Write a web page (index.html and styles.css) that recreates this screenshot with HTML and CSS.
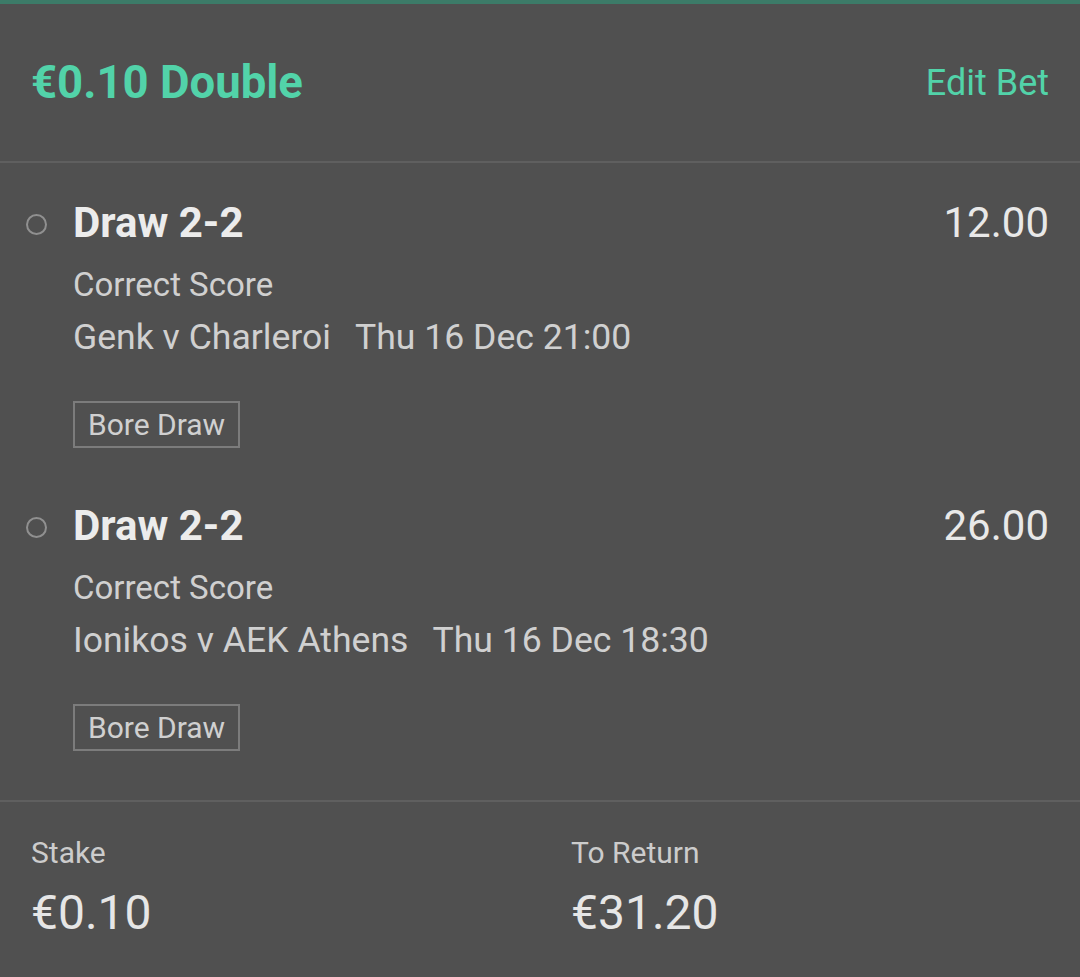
FILE: index.html
```html
<!DOCTYPE html>
<html>
<head>
<meta charset="utf-8">
<link rel="stylesheet" href="styles.css">
</head>
<body>
<div class="slip">
  <div class="topbar"></div>
  <header class="head">
    <h1 class="title">€0.10 Double</h1>
    <a class="edit">Edit Bet</a>
  </header>
  <div class="divider"></div>
  <section class="legs">
    <div class="leg">
      <div class="bullet"><span class="dot"></span></div>
      <div class="info">
        <div class="row">
          <span class="sel">Draw 2-2</span>
          <span class="odds">12.00</span>
        </div>
        <div class="sub">Correct Score</div>
        <div class="sub event">Genk v Charleroi<span class="time">Thu 16 Dec 21:00</span></div>
        <span class="tag">Bore Draw</span>
      </div>
    </div>
    <div class="leg">
      <div class="bullet"><span class="dot"></span></div>
      <div class="info">
        <div class="row">
          <span class="sel">Draw 2-2</span>
          <span class="odds">26.00</span>
        </div>
        <div class="sub">Correct Score</div>
        <div class="sub event">Ionikos v AEK Athens<span class="time">Thu 16 Dec 18:30</span></div>
        <span class="tag">Bore Draw</span>
      </div>
    </div>
  </section>
  <div class="divider"></div>
  <footer class="foot">
    <div class="cell">
      <div class="label">Stake</div>
      <div class="value">€0.10</div>
    </div>
    <div class="cell">
      <div class="label">To Return</div>
      <div class="value">€31.20</div>
    </div>
  </footer>
</div>
</body>
</html>
```

FILE: styles.css
```css
html, body {
  margin: 0;
  padding: 0;
  background: #505050;
}
body {
  font-family: Roboto, "Liberation Sans", sans-serif;
  width: 1080px;
  height: 977px;
  overflow: hidden;
}
.topbar {
  height: 4px;
  background: #3c7b68;
}
.head {
  height: 157px;
  display: flex;
  align-items: center;
  justify-content: space-between;
  padding: 0 31px 0 31px;
}
.title {
  margin: 0;
  font-size: 45.5px;
  font-weight: 700;
  color: #52d3a9;
  line-height: 50px;
}
.edit {
  font-size: 36px;
  color: #52d3a9;
  line-height: 40px;
}
.divider {
  height: 2px;
  background: #5f5f5f;
}
.legs {
  padding-bottom: 31px;
}
.leg {
  display: flex;
  padding: 35px 31px 18px 0;
}
.bullet {
  width: 73px;
  height: 50px;
  flex: none;
  display: flex;
  align-items: center;
}
.dot {
  margin-left: 26px;
  margin-top: 2px;
  width: 17px;
  height: 17px;
  border: 2px solid #909090;
  border-radius: 50%;
}
.info {
  flex: 1;
  display: flex;
  flex-direction: column;
  align-items: flex-start;
}
.row {
  align-self: stretch;
  display: flex;
  justify-content: space-between;
  line-height: 50px;
  margin-bottom: 10px;
}
.sel {
  font-size: 42px;
  font-weight: 700;
  color: #ececec;
}
.odds {
  font-size: 42px;
  color: #e8e8e8;
}
.sub {
  font-size: 33px;
  line-height: 53px;
  color: #d0d0d0;
}
.event {
  font-size: 35.6px;
}
.time {
  margin-left: 24px;
}
.tag {
  margin-top: 37px;
  border: 2px solid #7c7c7c;
  padding: 0 13px;
  font-size: 30px;
  line-height: 43px;
  color: #d0d0d0;
}
.foot {
  display: grid;
  grid-template-columns: 1fr 1fr;
  padding-top: 31px;
}
.cell {
  padding-left: 31px;
}
.label {
  font-size: 30px;
  line-height: 40px;
  color: #cccccc;
}
.value {
  margin-top: 10px;
  font-size: 48px;
  line-height: 60px;
  color: #e6e6e6;
}
```
